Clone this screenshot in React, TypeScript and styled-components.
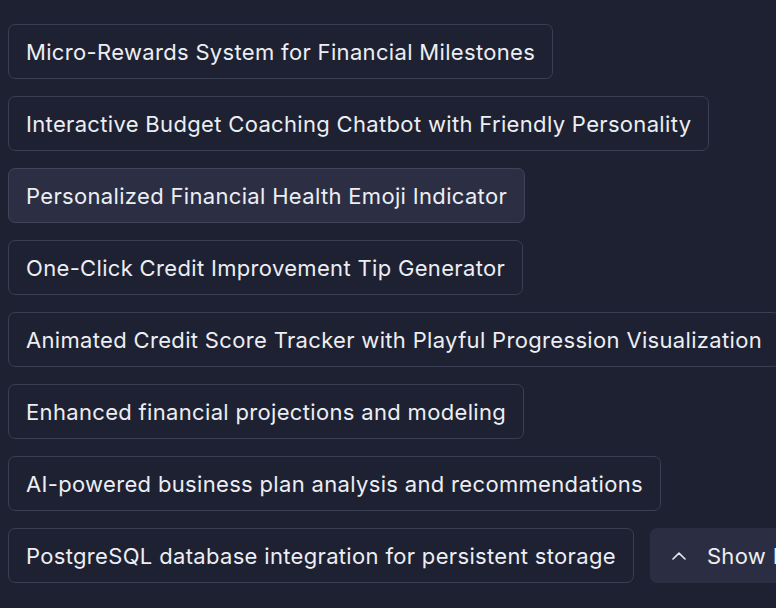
import React from "react";
import styled, { createGlobalStyle } from "styled-components";

const GlobalStyle = createGlobalStyle`
  html, body {
    margin: 0;
    padding: 0;
    background: #1e2132;
    overflow: hidden;
  }
  body {
    font-family: "Inter", "Noto Sans", sans-serif;
  }
`;

const Page = styled.div`
  padding: 24px 8px;
  width: 860px;
  box-sizing: border-box;
`;

const List = styled.div`
  display: flex;
  flex-wrap: wrap;
  gap: 17px 16px;
  align-items: center;
`;

const Chip = styled.button<{ $active?: boolean }>`
  display: inline-flex;
  align-items: center;
  height: 55px;
  box-sizing: border-box;
  padding: 0 17px;
  border: 1px solid ${(p) => (p.$active ? "#40445a" : "#3a3e52")};
  border-radius: 7px;
  background: ${(p) => (p.$active ? "#2c2f43" : "transparent")};
  color: #eceef3;
  font-family: "Inter", "Noto Sans", sans-serif;
  font-size: 22px;
  letter-spacing: 0.33px;
  white-space: nowrap;
  cursor: pointer;
`;

const ToggleButton = styled.button`
  display: inline-flex;
  align-items: center;
  gap: 21px;
  height: 55px;
  box-sizing: border-box;
  padding: 0 22px;
  border: none;
  border-radius: 7px;
  background: #2b2e42;
  color: #eceef3;
  font-family: "Inter", "Noto Sans", sans-serif;
  font-size: 22px;
  letter-spacing: 0.33px;
  white-space: nowrap;
  cursor: pointer;
`;

const items = [
  "Micro-Rewards System for Financial Milestones",
  "Interactive Budget Coaching Chatbot with Friendly Personality",
  "Personalized Financial Health Emoji Indicator",
  "One-Click Credit Improvement Tip Generator",
  "Animated Credit Score Tracker with Playful Progression Visualization",
  "Enhanced financial projections and modeling",
  "AI-powered business plan analysis and recommendations",
  "PostgreSQL database integration for persistent storage",
];

function ChevronUp() {
  return (
    <svg width="14" height="8" viewBox="0 0 14 8" fill="none">
      <path d="M1 7L7 1.2L13 7" stroke="#e6e8ee" strokeWidth="1.6" strokeLinecap="round" strokeLinejoin="round" />
    </svg>
  );
}

export default function App() {
  return (
    <>
      <GlobalStyle />
      <Page>
        <List>
          {items.map((t, i) => (
            <Chip key={t} $active={i === 2}>
              {t}
            </Chip>
          ))}
          <ToggleButton>
            <ChevronUp />
            Show Less
          </ToggleButton>
        </List>
      </Page>
    </>
  );
}
